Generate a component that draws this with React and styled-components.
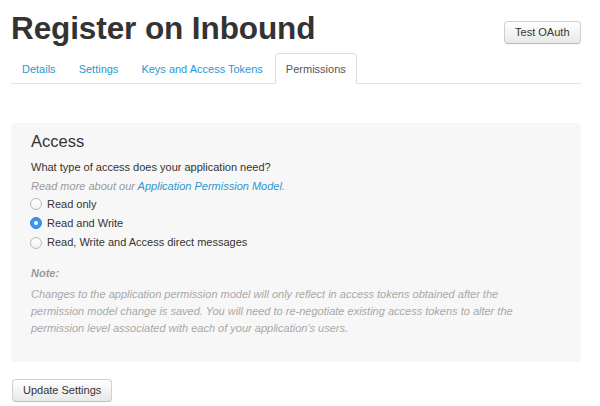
import React from "react";
import styled, { createGlobalStyle } from "styled-components";

const GlobalStyle = createGlobalStyle`
  html, body {
    margin: 0;
    padding: 0;
    background: #fff;
  }
  body {
    font-family: "Liberation Sans", Arial, Helvetica, sans-serif;
    color: #333;
  }
`;

const Page = styled.div`
  width: 600px;
  box-sizing: border-box;
  padding: 12.4px 19px 0 11px;
`;

const Header = styled.div`
  display: flex;
  justify-content: space-between;
  align-items: flex-start;
`;

const Title = styled.h1`
  margin: 0;
  font-size: 31.5px;
  line-height: 32px;
  font-weight: 700;
  color: #333;
  letter-spacing: -0.1px;
`;

const Button = styled.button`
  font-family: "Liberation Sans", Arial, sans-serif;
  font-size: 11px;
  color: #333;
  height: ${(p) => p.$h || 23}px;
  padding: 0 ${(p) => p.$px || 10}px;
  margin-top: ${(p) => p.$top || 0}px;
  border: 1px solid #cfcfcf;
  border-bottom-color: #bdbdbd;
  border-radius: 4px;
  background: linear-gradient(#ffffff, #e8e8e8);
  box-shadow: 0 1px 1px rgba(0, 0, 0, 0.05);
  cursor: pointer;
`;

const Tabs = styled.ul`
  list-style: none;
  display: flex;
  margin: 8.6px 0 0;
  padding: 0;
  border-bottom: 1px solid #e3e3e3;
`;

const Tab = styled.li`
  margin-right: 1px;
  margin-bottom: -1px;
  padding: 7px 10px 6px;
  line-height: 16px;
  font-size: 11px;
  border: 1px solid ${(p) => (p.$active ? "#dddddd" : "transparent")};
  border-bottom-color: ${(p) => (p.$active ? "#fff" : "transparent")};
  border-radius: 4px 4px 0 0;
  background: ${(p) => (p.$active ? "#fff" : "transparent")};
  color: ${(p) => (p.$active ? "#555" : "#2b97d1")};
`;

const Panel = styled.section`
  margin-top: 39px;
  background: #f7f7f7;
  border-radius: 4px;
  padding: 8px 20px 25px;
`;

const Heading = styled.h2`
  margin: 0;
  font-size: 16.5px;
  line-height: 20px;
  font-weight: 400;
  color: #333;
`;

const Question = styled.p`
  margin: 6px 0 0;
  font-size: 11px;
  line-height: 20px;
`;

const Hint = styled.p`
  margin: 1px 0 0;
  font-size: 11px;
  line-height: 17px;
  font-style: italic;
  color: #9a9a9a;

  a {
    color: #2b97d1;
    text-decoration: none;
  }
`;

const RadioList = styled.div`
  margin-top: -1px;
  display: flex;
  flex-direction: column;
`;

const RadioRow = styled.label`
  display: flex;
  align-items: center;
  height: 19.3px;
  font-size: 11px;
  color: #333;
`;

const RadioDot = styled.span`
  box-sizing: border-box;
  width: 12px;
  height: 12px;
  margin: 1px 5px 0 -1px;
  border-radius: 50%;
  flex-shrink: 0;
  position: relative;
  background: ${(p) => (p.$checked ? "#3b96f3" : "linear-gradient(#fff, #f2f2f2)")};
  border: 1px solid ${(p) => (p.$checked ? "#2f86e0" : "#b8b8b8")};

  &::after {
    content: "";
    display: ${(p) => (p.$checked ? "block" : "none")};
    position: absolute;
    left: 50%;
    top: 50%;
    width: 4px;
    height: 4px;
    margin: -2px 0 0 -2px;
    border-radius: 50%;
    background: #fff;
  }
`;

const Note = styled.div`
  margin-top: 13px;
  font-size: 11px;
  line-height: 17px;
  font-style: italic;
  color: #a8a8a8;

  b {
    display: block;
    color: #9a9a9a;
  }

  p {
    margin: 4px 0 0;
    max-width: 492px;
  }
`;

const Footer = styled.div`
  margin-top: 17px;
  padding-left: 1px;
`;

const tabs = ["Details", "Settings", "Keys and Access Tokens", "Permissions"];

const options = [
  { label: "Read only", checked: false },
  { label: "Read and Write", checked: true },
  { label: "Read, Write and Access direct messages", checked: false },
];

export default function App() {
  return (
    <Page>
      <GlobalStyle />
      <Header>
        <Title>Register on Inbound</Title>
        <Button $top={8.6} $px={10.5}>Test OAuth</Button>
      </Header>
      <Tabs>
        {tabs.map((t) => (
          <Tab key={t} $active={t === "Permissions"}>
            {t}
          </Tab>
        ))}
      </Tabs>
      <Panel>
        <Heading>Access</Heading>
        <Question>What type of access does your application need?</Question>
        <Hint>
          Read more about our <a href="#">Application Permission Model</a>.
        </Hint>
        <RadioList>
          {options.map((o) => (
            <RadioRow key={o.label}>
              <RadioDot $checked={o.checked} />
              {o.label}
            </RadioRow>
          ))}
        </RadioList>
        <Note>
          <b>Note:</b>
          <p>
            Changes to the application permission model will only reflect in
            access tokens obtained after the permission model change is saved.
            You will need to re-negotiate existing access tokens to alter the
            permission level associated with each of your application's users.
          </p>
        </Note>
      </Panel>
      <Footer>
        <Button $px={10}>Update Settings</Button>
      </Footer>
    </Page>
  );
}
